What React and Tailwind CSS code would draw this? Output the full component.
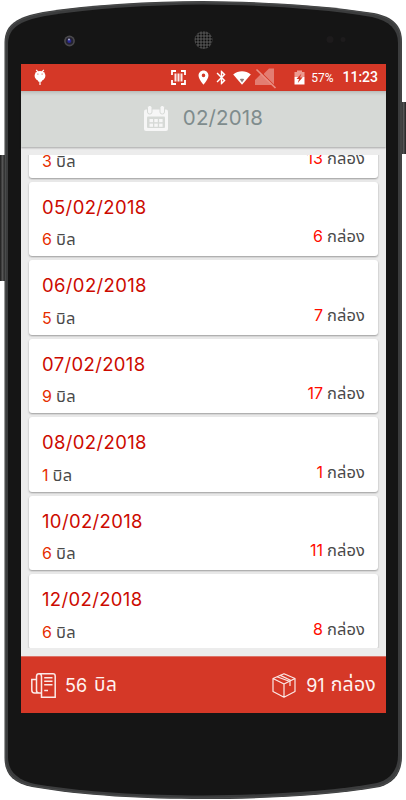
import React from "react";
import {
  MdLocationOn,
  MdBluetooth,
} from "react-icons/md";

// The first day is scrolled under the month bar, only its totals stay in view
const days = [
  { bills: 3, boxes: 13 },
  { date: "05/02/2018", bills: 6, boxes: 6 },
  { date: "06/02/2018", bills: 5, boxes: 7 },
  { date: "07/02/2018", bills: 9, boxes: 17 },
  { date: "08/02/2018", bills: 1, boxes: 1 },
  { date: "10/02/2018", bills: 6, boxes: 11 },
  { date: "12/02/2018", bills: 6, boxes: 8 },
];

// Phone body, side buttons, camera and speaker
function PhoneShell() {
  return (
    <svg className="absolute inset-0" width="406" height="800" viewBox="0 0 406 800">
      <defs>
        <pattern id="grill" width="3" height="3" patternUnits="userSpaceOnUse">
          <circle cx="1.5" cy="1.5" r="1" fill="#090909" />
        </pattern>
        <linearGradient id="side" x1="0" x2="1" y1="0" y2="0">
          <stop offset="0" stopColor="#1b1b1b" />
          <stop offset="0.5" stopColor="#555" />
          <stop offset="1" stopColor="#222" />
        </linearGradient>
      </defs>
      <rect x="0" y="155" width="5" height="126" fill="url(#side)" />
      <rect x="401" y="102" width="5" height="52" fill="url(#side)" />
      <path
        d="M4.5 42C5 24 17 17 43 12C92 4 150 1.5 203 1C256 1.5 318 4 374 13C393 17 402 25 402 42V756C402 774 393 783 380 787C330 796 260 799 203 799C145 799 83 796 32 787C13 783 4.500 774 4.500 758Z"
        fill="#3b3c3d"
      />
      <path
        d="M5.500 42C6 25 18 18 44 13C92 5 150 2.500 203 2C256 2.500 318 5 373 14C392 18 401 26 401 42V756C401 773 392 782 379 786C330 795 260 798 203 798C145 798 83 795 33 786C14 782 5.500 773 5.500 758Z"
        fill="none"
        stroke="#505152"
        strokeWidth="0.7"
      />
      <path
        d="M8 43C9 28 19 21 45 16C93 8 150 5 203 4.500C256 5 318 8 372 17C389 21 398 29 398 43V755C398 771 389 780 377 783C330 792 260 795 203 795.500C145 795.500 84 792 35 784C17 780 8 771 8 757Z"
        fill="#151515"
      />
      <circle cx="69.500" cy="41" r="5.400" fill="#4b4a4d" />
      <circle cx="69.500" cy="41" r="3.800" fill="#242231" />
      <circle cx="69.300" cy="41" r="2" fill="#2a2a93" />
      <circle cx="69" cy="39.500" r="0.900" fill="#b9b9d8" />
      <circle cx="203.500" cy="40" r="9" fill="#4d4d4d" />
      <circle cx="203.500" cy="40" r="9" fill="url(#grill)" />
      <circle cx="330" cy="39.500" r="3.500" fill="#1d1b1c" />
      <circle cx="343" cy="39.500" r="2.500" fill="#1d1b1c" />
    </svg>
  );
}

function DebugIcon() {
  return (
    <svg width="12" height="17" viewBox="0 0 12 17" fill="#fff">
      <path d="M2.200 0.800L3.900 2.900M9.800 0.800L8.100 2.900" stroke="#fff" strokeWidth="1.200" />
      <ellipse cx="6" cy="6.800" rx="5.400" ry="4.900" />
      <path d="M2.500 9.500H9.500L7.500 12.700H4.500Z" />
      <path d="M6 12V16" stroke="#fff" strokeWidth="1.200" />
      <circle cx="3.900" cy="5" r="0.600" fill="#d53827" />
      <circle cx="8.100" cy="5" r="0.600" fill="#d53827" />
    </svg>
  );
}

function BarcodeIcon() {
  return (
    <svg width="15" height="15" viewBox="0 0 15 15" fill="none" stroke="#fff">
      <path d="M5 1H1V5M10 1H14V5M5 14H1V10M10 14H14V10" strokeWidth="1.800" />
      <path d="M4.500 3.500V11.500M7.500 3.500V11.500M10.500 3.500V11.500" strokeWidth="2" opacity="0.9" />
    </svg>
  );
}

function WifiIcon() {
  return (
    <svg width="18" height="14" viewBox="0 0 18 14">
      <path d="M0.200 3.500C5.500-0.800 12.500-0.800 17.800 3.500L9 13.800Z" fill="#fff" />
      <path d="M6.800 8.300C8 7.700 10 7.700 11.200 8.300L9 11.500Z" fill="#8c7c78" />
    </svg>
  );
}

function NoSignalIcon() {
  return (
    <svg width="23" height="22" viewBox="0 0 23 22" fill="none">
      <path d="M10 6.500L15 1.500H20V17.500L10 7.500ZM7 7L17 17V18H1V13Z" fill="#fff" opacity="0.350" />
      <path d="M2.500 2.500L21.500 21" stroke="#e99085" strokeWidth="1.700" />
    </svg>
  );
}

function BatteryIcon() {
  return (
    <svg width="11" height="15" viewBox="0 0 11 15">
      <path d="M0.500 2H3V0.500H8V2H10.500V7H0.500Z" fill="#ed9b91" />
      <path d="M0.500 7H10.500V14.500H0.500Z" fill="#fff" />
      <path d="M7.500 3.500L2.500 9H5L3.800 13L8.700 7.300H6Z" fill="#d53827" />
    </svg>
  );
}

function CalendarIcon() {
  return (
    <svg width="24" height="25" viewBox="0 0 24 25">
      <rect x="0" y="3.500" width="24" height="21.500" rx="2" fill="#f6f6f6" />
      <rect x="3" y="10.500" width="18" height="11.500" rx="1" fill="#d6d9d6" />
      <g fill="#f6f6f6" stroke="#d6d9d6" strokeWidth="1">
        <rect x="3.500" y="-0.500" width="4.500" height="8.500" rx="2" />
        <rect x="16" y="-0.500" width="4.500" height="8.500" rx="2" />
      </g>
      <g fill="#f6f6f6">
        <rect x="5.500" y="13" width="3.500" height="3.200" />
        <rect x="10.300" y="13" width="3.500" height="3.200" />
        <rect x="15.100" y="13" width="3.500" height="3.200" />
        <rect x="5.500" y="17.600" width="3.500" height="3.200" />
        <rect x="10.300" y="17.600" width="3.500" height="3.200" />
        <rect x="15.100" y="17.600" width="3.500" height="3.200" />
      </g>
    </svg>
  );
}

function BillIcon() {
  return (
    <svg width="25" height="25" viewBox="0 0 25 25" fill="none" stroke="#fbe9e7" strokeWidth="1.500">
      <path d="M10.500 24.200V3.500Q10.500 0.800 8 0.800H22Q24.200 0.800 24.200 3V24.200Z" />
      <path d="M8 0.800Q5.500 0.800 5.500 3.500V17.500Q5.500 20 8 20H10.500M5.500 6.500H0.800V17Q0.800 20 3.500 20H8" />
      <path d="M13.200 4.800H21.500M13.200 8.300H21.500M13.200 11.800H21.500M13.200 17.500H17" />
    </svg>
  );
}

function BoxIcon() {
  return (
    <svg width="24" height="25" viewBox="0 0 24 25" fill="none" stroke="#fbe9e7" strokeWidth="1.200" strokeLinejoin="round">
      <path d="M12 0.800L23 5.500V18.500L12 24.200L1 18.500V5.500ZM1 5.500L12 11L23 5.500M12 11V24.200" />
      <path d="M5 3.800L18 8.500V13M8.300 2.400L19 7.500" />
    </svg>
  );
}

function DayCard({ date, bills, boxes }) {
  return (
    <div className="flex h-[74.500px] shrink-0 flex-col justify-between rounded-[3px] bg-white px-3 pt-[14px] pb-[5px] shadow-[0_1px_2px_rgba(0,0,0,0.35)]">
      <p className="h-[22px] pl-px text-[18.500px] leading-[22px] font-[380] tracking-[0.35px] text-[#cc0a00]">{date}</p>
      <div className="flex justify-between text-[16px] leading-[24px] text-[#4a4a4a]">
        <p className="flex gap-[4px] pl-px">
          <span className="font-[380] text-[#e62e00]">{bills}</span>
          <span className="text-[16.500px] font-[380] tracking-[0.3px]">บิล</span>
        </p>
        <p className="-mt-[3px] flex gap-[4px] pr-px">
          <span className="font-[380] text-[#ff0d00]">{boxes}</span>
          <span className="text-[16.500px] font-[380] tracking-[0.1px]">กล่อง</span>
        </p>
      </div>
    </div>
  );
}

export default function App() {
  return (
    <div className="relative h-[800px] w-[406px] overflow-hidden bg-white font-['Inter','Noto_Sans_Thai','Noto_Sans',sans-serif]">
      <PhoneShell />

      <div className="relative flex h-full flex-col pt-[64px] pr-5 pb-[87px] pl-[21px]">
        {/* Status bar */}
        <div className="flex h-[27px] shrink-0 items-center bg-[#d53827] pr-[8px] pl-[13px] font-['Roboto',sans-serif] text-white">
          <DebugIcon />
          <div className="ml-auto flex items-center">
            <BarcodeIcon />
            <MdLocationOn className="ml-[9px] h-[17px] w-[17px]" />
            <MdBluetooth className="ml-px h-[17px] w-[17px]" />
            <div className="ml-[3px]"><WifiIcon /></div>
            <div className="ml-[3px]"><NoSignalIcon /></div>
            <div className="ml-[17px]"><BatteryIcon /></div>
            <span className="ml-[6px] text-[12px]">57%</span>
            <span className="ml-[9px] text-[14px] font-medium">11:23</span>
          </div>
        </div>

        {/* Month picker */}
        <div className="z-10 flex h-[56px] shrink-0 items-center justify-center gap-[15px] bg-[#d6d9d6] pb-px shadow-[0_1px_2px_rgba(0,0,0,0.3),inset_0_4px_4px_-3px_rgba(0,0,0,0.2)]">
          <CalendarIcon />
          <span className="text-[20.500px] font-[380] tracking-[0.15px] text-[#7f8c8d]">02/2018</span>
        </div>

        {/* Days */}
        <div className="min-h-0 flex-1 bg-[#ececec] py-2">
          <div className="flex h-full flex-col overflow-hidden px-2">
            <div className="-mt-[52px] flex flex-col gap-[4px]">
              {days.map((day, i) => (
                <DayCard key={i} {...day} />
              ))}
            </div>
          </div>
        </div>

        {/* Totals */}
        <div className="flex h-[57px] shrink-0 items-center justify-between border-t border-[#dc7368] bg-[#d53827] px-[10px] text-[18px] text-[#fff3f1]">
          <div className="flex items-center gap-[9px]">
            <BillIcon />
            <p className="flex items-center gap-[7px]">
              <span>56</span>
              <span className="text-[19px] tracking-[0.4px]">บิล</span>
            </p>
          </div>
          <div className="flex items-center gap-[10px]">
            <BoxIcon />
            <p className="flex items-center gap-[6px]">
              <span>91</span>
              <span className="text-[19.500px] tracking-[0.2px]">กล่อง</span>
            </p>
          </div>
        </div>
      </div>
    </div>
  );
}
